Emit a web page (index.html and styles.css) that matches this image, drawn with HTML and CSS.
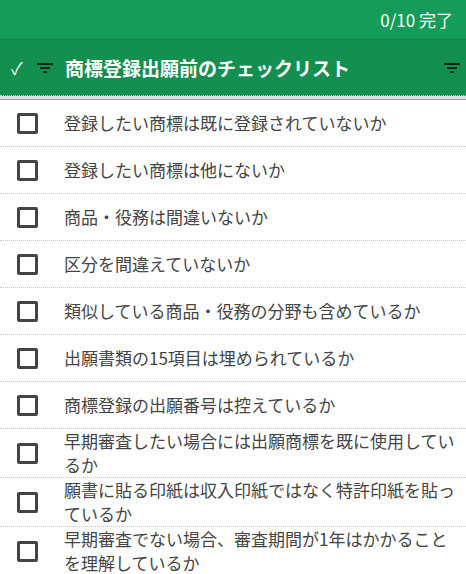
FILE: index.html
```html
<!DOCTYPE html>
<html lang="ja">
<head>
<meta charset="utf-8">
<title>商標登録出願前のチェックリスト</title>
<link rel="stylesheet" href="styles.css">
</head>
<body>
<div class="topbar"><span class="progress">0/10 完了</span></div>
<div class="header">
  <span class="check">✓</span>
  <svg class="filter" width="16" height="12" viewBox="0 0 16 12"><rect x="0" y="1" width="16" height="2"/><rect x="3" y="5" width="10" height="2"/><rect x="6" y="9" width="4" height="2"/></svg>
  <h1 class="title">商標登録出願前のチェックリスト</h1>
  <svg class="filter filter-right" width="16" height="12" viewBox="0 0 16 12"><rect x="0" y="1" width="16" height="2"/><rect x="3" y="5" width="10" height="2"/><rect x="6" y="9" width="4" height="2"/></svg>
</div>
<div class="divider"></div>
<ul class="list">
  <li class="row"><span class="box"></span><span class="label">登録したい商標は既に登録されていないか</span></li>
  <li class="row"><span class="box"></span><span class="label">登録したい商標は他にないか</span></li>
  <li class="row"><span class="box"></span><span class="label">商品・役務は間違いないか</span></li>
  <li class="row"><span class="box"></span><span class="label">区分を間違えていないか</span></li>
  <li class="row"><span class="box"></span><span class="label">類似している商品・役務の分野も含めているか</span></li>
  <li class="row"><span class="box"></span><span class="label">出願書類の15項目は埋められているか</span></li>
  <li class="row"><span class="box"></span><span class="label">商標登録の出願番号は控えているか</span></li>
  <li class="row"><span class="box"></span><span class="label">早期審査したい場合には出願商標を既に使用しているか</span></li>
  <li class="row"><span class="box"></span><span class="label">願書に貼る印紙は収入印紙ではなく特許印紙を貼っているか</span></li>
  <li class="row"><span class="box"></span><span class="label">早期審査でない場合、審査期間が1年はかかることを理解しているか</span></li>
</ul>
</body>
</html>
```

FILE: styles.css
```css
* { box-sizing: border-box; }
html, body { margin: 0; padding: 0; background: #fff; }
body {
  font-family: "Noto Sans CJK JP", "Noto Sans", sans-serif;
  overflow: hidden;
}
.topbar {
  height: 40px;
  background: #159c59;
  border-bottom: 1px solid #0f8748;
  display: flex;
  align-items: center;
  justify-content: flex-end;
  padding-right: 13px;
  color: #fff;
  font-size: 17px;
}
.header {
  height: 56px;
  background: #13904f;
  border-bottom: 1px dotted #9fdcbc;
  display: flex;
  align-items: center;
  padding: 0 6px 0 11px;
  color: #fff;
}
.check {
  font-size: 17px;
  width: 26px;
  line-height: 1;
}
.filter {
  fill: #0b2416;
  flex: none;
}
.title {
  margin: 0 0 0 12px;
  font-size: 19px;
  font-weight: 700;
  line-height: 1;
  flex: 1;
}
.divider {
  height: 4px;
  background: #dfe0e6;
  border-bottom: 1px solid #9c9ca0;
}
.list {
  list-style: none;
  margin: 0;
  padding: 0;
}
.row {
  display: flex;
  align-items: center;
  min-height: 47px;
  border-bottom: 1px dotted #c8c8c8;
  padding: 0 8px 0 17px;
}
.box {
  flex: none;
  width: 21px;
  height: 21px;
  border: 3px solid #444;
  border-radius: 2px;
  margin-right: 26px;
}
.label {
  font-size: 17px;
  line-height: 24px;
  color: #444;
}
```
